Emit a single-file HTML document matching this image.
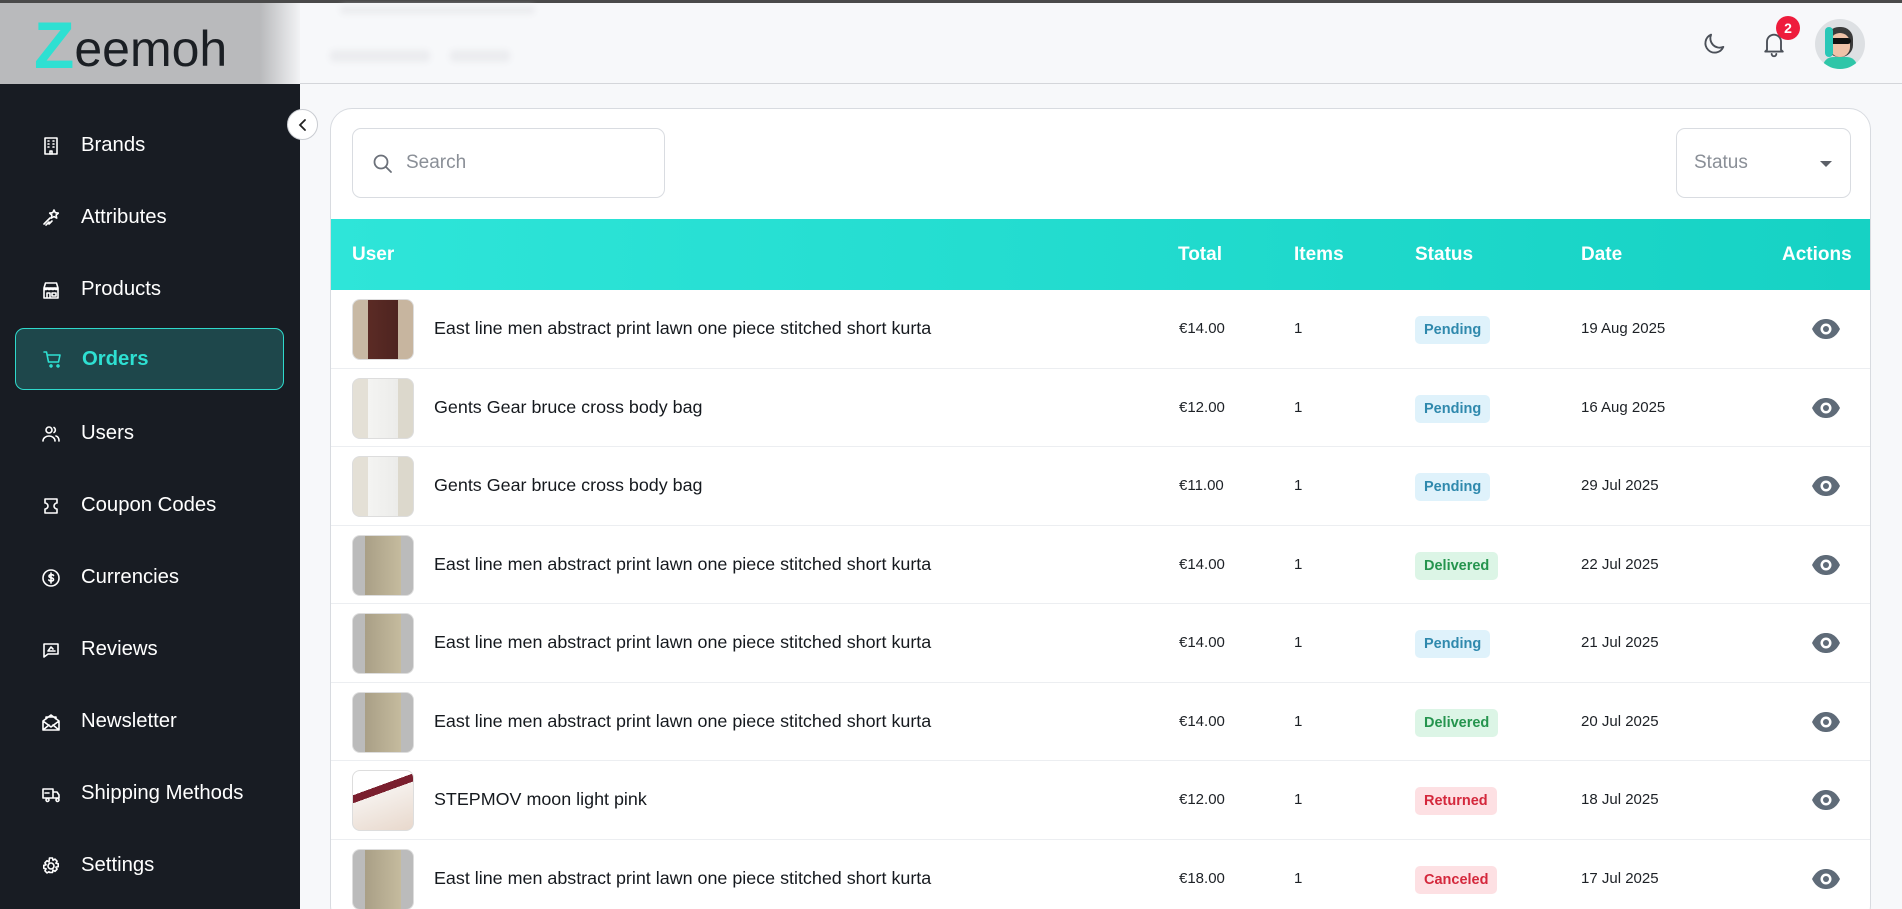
<!DOCTYPE html>
<html><head><meta charset="utf-8"><style>
*{box-sizing:border-box;margin:0;padding:0}
html{width:1902px;height:909px;overflow:hidden}
body{width:1902px;height:909px;overflow:hidden;background:#f7f8fa;font-family:"Liberation Sans",sans-serif;position:relative}
.topline{position:absolute;left:0;top:0;width:1902px;height:3px;background:#4a4a4a}
.header{position:absolute;left:0;top:3px;width:1902px;height:81px;background:#f7f8fa;border-bottom:1px solid #d4d6da}
.logoarea{position:absolute;left:0;top:3px;width:300px;height:81px;background:linear-gradient(90deg,#b9babc 0,#b9babc 260px,#f2f3f5 300px)}
.logo{position:absolute;left:34px;top:2px;font-size:50px;color:#1b1f24;white-space:nowrap}
.logo span{color:#2ee0d2;font-size:66px;font-weight:700;position:relative;top:2px}
.blur{position:absolute;background:#ebecef;border-radius:4px;filter:blur(3px)}
.sidebar{position:absolute;left:0;top:84px;width:300px;height:825px;background:#181c23}
.item{position:absolute;left:15px;width:269px;height:55px;display:flex;align-items:center;color:#fff;font-size:20.3px}
.item svg{position:absolute;left:26px;width:20px;height:20px;fill:none;stroke:#fff;stroke-width:1.6;stroke-linecap:round;stroke-linejoin:round}
.item span{position:absolute;left:66px}
.item.active{background:#1e474b;border:1.5px solid #2fd9cb;border-radius:9px;color:#2ee0d2;font-weight:700}
.item.active svg{stroke:#2ee0d2}
.collapse{position:absolute;left:287px;top:109px;width:31px;height:31px;border-radius:50%;background:#fff;border:1px solid #c9ccd1;display:flex;align-items:center;justify-content:center}
.card{position:absolute;left:330px;top:108px;width:1541px;height:820px;background:#fff;border:1px solid #d8dbe0;border-radius:22px;overflow:hidden}
.search{position:absolute;left:21px;top:19px;width:313px;height:70px;border:1px solid #d9dce1;border-radius:9px}
.search span{position:absolute;left:53px;top:23px;font-size:19px;color:#8a8f97}
.status{position:absolute;left:1345px;top:19px;width:175px;height:70px;border:1px solid #d9dce1;border-radius:9px}
.status span{position:absolute;left:17px;top:23px;font-size:19px;color:#8a8f97}
.status i{position:absolute;left:143px;top:32px;border-left:6px solid transparent;border-right:6px solid transparent;border-top:6px solid #5c6068}
.thead{position:absolute;left:0;top:110px;width:1541px;height:71px;background:linear-gradient(90deg,#2ee5d9,#16d2c4);color:#fff;font-weight:700;font-size:19px}
.thead div{position:absolute;top:25px}
.row{position:absolute;left:0;width:1541px;height:78.5px;border-bottom:1px solid #eceef1;font-size:15px;color:#1d2126}
.row .img{position:absolute;left:21px;top:9px;width:62px;height:61px;border-radius:8px;border:1px solid #ddd}
.row .t{position:absolute;left:103px;top:28px;font-size:17.9px;color:#15191e}
.row .c{position:absolute;top:30px}
.badge{position:absolute;left:1084px;top:26px;height:28px;line-height:28px;padding:0 9px;border-radius:5px;font-weight:700;font-size:14.5px}
.pend{background:#dff2fb;color:#2f89ad}
.del{background:#dcf5e6;color:#25944e}
.ret,.can{background:#fde0e3;color:#d4283c}
.eye{position:absolute;left:1480px;top:28px}
</style></head><body>
<div class="header"></div>
<div class="topline"></div>
<div class="logoarea"><div class="logo"><span>Z</span>eemoh</div></div>
<div class="blur" style="left:340px;top:6px;width:195px;height:8px"></div>
<div class="blur" style="left:330px;top:50px;width:100px;height:12px"></div>
<div class="blur" style="left:450px;top:50px;width:60px;height:12px"></div>
<svg style="position:absolute;left:1700px;top:30px" width="28" height="28" viewBox="0 0 24 24" fill="none" stroke="#4b5058" stroke-width="1.6" stroke-linecap="round" stroke-linejoin="round"><path d="M20 14.5A8 8 0 0 1 9.5 4a8 8 0 1 0 10.5 10.5z"/></svg>
<svg style="position:absolute;left:1760px;top:30px" width="28" height="28" viewBox="0 0 24 24" fill="none" stroke="#4b5058" stroke-width="1.6" stroke-linecap="round" stroke-linejoin="round"><path d="M6 17V10a6 6 0 0 1 12 0v7l1.5 1.5h-15z"/><path d="M10 20.5a2 2 0 0 0 4 0"/></svg>
<div style="position:absolute;left:1776px;top:16px;width:24px;height:24px;border-radius:50%;background:#ee1c3c;color:#fff;font-size:14px;font-weight:700;text-align:center;line-height:24px">2</div>
<div style="position:absolute;left:1815px;top:19px;width:50px;height:50px;border-radius:50%;background:#dde0e3;overflow:hidden">
<div style="position:absolute;left:12px;top:8px;width:26px;height:30px;border-radius:12px;background:#3a3a3a"></div>
<div style="position:absolute;left:15px;top:14px;width:20px;height:24px;border-radius:10px;background:#f0c2a8"></div>
<div style="position:absolute;left:14px;top:19px;width:22px;height:6px;border-radius:3px;background:#111"></div>
<div style="position:absolute;left:8px;top:38px;width:34px;height:20px;border-radius:10px;background:#2fc6a8"></div>
<div style="position:absolute;left:10px;top:8px;width:8px;height:30px;border-radius:4px;background:#2ac7b7"></div>
</div>
<div class="sidebar">
<div class="item" style="top:34px"><svg viewBox="0 0 20 20"><rect x="4" y="2" width="12" height="16"/><path d="M7 5h1M12 5h1M7 8h1M12 8h1M7 11h1M12 11h1M9 18v-3h2v3"/></svg><span>Brands</span></div>
<div class="item" style="top:106px"><svg viewBox="0 0 20 20"><path d="M13 2l1.3 2.7 3 .4-2.2 2 .6 3-2.7-1.5-2.7 1.5.6-3-2.2-2 3-.4zM9 10l-6 6M8 14l-3 3M11 13l-3 3"/></svg><span>Attributes</span></div>
<div class="item" style="top:178px"><svg viewBox="0 0 20 20"><path d="M3 8l1.5-5h11L17 8M3 8h14v10H3zM3 8c0 2 3 2 3.5 0 .5 2 3 2 3.5 0 .5 2 3 2 3.5 0 .5 2 3.5 2 3.5 0M6 18v-5h3v5M11 13h4v3h-4z"/></svg><span>Products</span></div>
<div class="item active" style="top:244px;height:62px"><svg viewBox="0 0 20 20"><path d="M2 3h2.5l2 10h10l1.5-7H5.3M8 17a1 1 0 1 0 0-.1M15 17a1 1 0 1 0 0-.1"/></svg><span>Orders</span></div>
<div class="item" style="top:322px"><svg viewBox="0 0 20 20"><circle cx="8" cy="6" r="3"/><path d="M2 17c0-3 3-5 6-5s6 2 6 5M13 3.5a3 3 0 0 1 0 5M15 12c2 .5 3 2.5 3 5"/></svg><span>Users</span></div>
<div class="item" style="top:394px"><svg viewBox="0 0 20 20"><path d="M4 3h12v4a3 3 0 0 0 0 6v4H4v-4a3 3 0 0 0 0-6z"/></svg><span>Coupon Codes</span></div>
<div class="item" style="top:466px"><svg viewBox="0 0 20 20"><circle cx="10" cy="10" r="8"/><path d="M12.5 7.5c-.5-1-4.5-1.3-4.5.7 0 2 4.5 1 4.5 3.3 0 2-4 1.8-4.7.5M10 5v10"/></svg><span>Currencies</span></div>
<div class="item" style="top:538px"><svg viewBox="0 0 20 20"><path d="M3 4h14v10H7l-4 3zM7 11l3-4 2 2M7 11h7"/></svg><span>Reviews</span></div>
<div class="item" style="top:610px"><svg viewBox="0 0 20 20"><path d="M2 9l8-6 8 6v9H2zM2 18l6-5M18 18l-6-5M2 9l8 6 8-6M5 7V5h10v2"/></svg><span>Newsletter</span></div>
<div class="item" style="top:682px"><svg viewBox="0 0 20 20"><path d="M2 5h10v9H2zM12 8h4l2 3v3h-6M5 16a1.5 1.5 0 1 0 0-.1M15 16a1.5 1.5 0 1 0 0-.1M4 9h4"/></svg><span>Shipping Methods</span></div>
<div class="item" style="top:754px"><svg viewBox="0 0 20 20"><circle cx="10" cy="10" r="3"/><path d="M8.5 2h3l.5 2.3 2-1.2 2.1 2.1-1.2 2 2.3.5v3l-2.3.5 1.2 2-2.1 2.1-2-1.2-.5 2.3h-3L8 15.7l-2 1.2-2.1-2.1 1.2-2L2.8 12.3v-3L5.1 8.8l-1.2-2L6 4.7l2 1.2z"/></svg><span>Settings</span></div>
</div>
<div class="collapse"><svg width="14" height="14" viewBox="0 0 14 14" fill="none" stroke="#222" stroke-width="1.8" stroke-linecap="round"><path d="M9 2L4 7l5 5"/></svg></div>
<div class="card">
<div class="search"><svg style="position:absolute;left:19px;top:24px" width="22" height="22" viewBox="0 0 22 22" fill="none" stroke="#6b7079" stroke-width="1.8" stroke-linecap="round"><circle cx="9" cy="9" r="6.5"/><path d="M14 14l5 5"/></svg><span>Search</span></div>
<div class="status"><span>Status</span><i></i></div>
<div class="thead"><div style="left:21px">User</div><div style="left:847px">Total</div><div style="left:963px">Items</div><div style="left:1084px">Status</div><div style="left:1250px">Date</div><div style="left:1451px">Actions</div></div>
<div class="row" style="top:181px"><div class="img" style="background:linear-gradient(90deg,#c8b9a4 0,#c8b9a4 25%,#5b2b25 25%,#4e2420 75%,#c7b59f 75%)"></div><div class="t">East line men abstract print lawn one piece stitched short kurta</div><div class="c" style="left:848px">€14.00</div><div class="c" style="left:963px">1</div><div class="badge pend">Pending</div><div class="c" style="left:1250px">19 Aug 2025</div><svg class="eye" width="30" height="22" viewBox="0 0 30 22"><path d="M1 11C5 3 10 1 15 1s10 2 14 10c-4 8-9 10-14 10S5 19 1 11z" fill="#5f6b78"/><circle cx="15" cy="11" r="5.5" fill="#fff"/><circle cx="15" cy="11" r="3" fill="#5f6b78"/></svg></div>
<div class="row" style="top:259.5px"><div class="img" style="background:linear-gradient(90deg,#e4e0d6 0,#e4e0d6 25%,#f4f4f2 25%,#ececea 75%,#dcd8cc 75%)"></div><div class="t">Gents Gear bruce cross body bag</div><div class="c" style="left:848px">€12.00</div><div class="c" style="left:963px">1</div><div class="badge pend">Pending</div><div class="c" style="left:1250px">16 Aug 2025</div><svg class="eye" width="30" height="22" viewBox="0 0 30 22"><path d="M1 11C5 3 10 1 15 1s10 2 14 10c-4 8-9 10-14 10S5 19 1 11z" fill="#5f6b78"/><circle cx="15" cy="11" r="5.5" fill="#fff"/><circle cx="15" cy="11" r="3" fill="#5f6b78"/></svg></div>
<div class="row" style="top:338px"><div class="img" style="background:linear-gradient(90deg,#e4e0d6 0,#e4e0d6 25%,#f4f4f2 25%,#ececea 75%,#dcd8cc 75%)"></div><div class="t">Gents Gear bruce cross body bag</div><div class="c" style="left:848px">€11.00</div><div class="c" style="left:963px">1</div><div class="badge pend">Pending</div><div class="c" style="left:1250px">29 Jul 2025</div><svg class="eye" width="30" height="22" viewBox="0 0 30 22"><path d="M1 11C5 3 10 1 15 1s10 2 14 10c-4 8-9 10-14 10S5 19 1 11z" fill="#5f6b78"/><circle cx="15" cy="11" r="5.5" fill="#fff"/><circle cx="15" cy="11" r="3" fill="#5f6b78"/></svg></div>
<div class="row" style="top:416.5px"><div class="img" style="background:linear-gradient(90deg,#bbb 0,#bbb 20%,#a99f86 20%,#c5bb9e 80%,#bbb 80%)"></div><div class="t">East line men abstract print lawn one piece stitched short kurta</div><div class="c" style="left:848px">€14.00</div><div class="c" style="left:963px">1</div><div class="badge del">Delivered</div><div class="c" style="left:1250px">22 Jul 2025</div><svg class="eye" width="30" height="22" viewBox="0 0 30 22"><path d="M1 11C5 3 10 1 15 1s10 2 14 10c-4 8-9 10-14 10S5 19 1 11z" fill="#5f6b78"/><circle cx="15" cy="11" r="5.5" fill="#fff"/><circle cx="15" cy="11" r="3" fill="#5f6b78"/></svg></div>
<div class="row" style="top:495px"><div class="img" style="background:linear-gradient(90deg,#bbb 0,#bbb 20%,#a99f86 20%,#c5bb9e 80%,#bbb 80%)"></div><div class="t">East line men abstract print lawn one piece stitched short kurta</div><div class="c" style="left:848px">€14.00</div><div class="c" style="left:963px">1</div><div class="badge pend">Pending</div><div class="c" style="left:1250px">21 Jul 2025</div><svg class="eye" width="30" height="22" viewBox="0 0 30 22"><path d="M1 11C5 3 10 1 15 1s10 2 14 10c-4 8-9 10-14 10S5 19 1 11z" fill="#5f6b78"/><circle cx="15" cy="11" r="5.5" fill="#fff"/><circle cx="15" cy="11" r="3" fill="#5f6b78"/></svg></div>
<div class="row" style="top:573.5px"><div class="img" style="background:linear-gradient(90deg,#bbb 0,#bbb 20%,#a99f86 20%,#c5bb9e 80%,#bbb 80%)"></div><div class="t">East line men abstract print lawn one piece stitched short kurta</div><div class="c" style="left:848px">€14.00</div><div class="c" style="left:963px">1</div><div class="badge del">Delivered</div><div class="c" style="left:1250px">20 Jul 2025</div><svg class="eye" width="30" height="22" viewBox="0 0 30 22"><path d="M1 11C5 3 10 1 15 1s10 2 14 10c-4 8-9 10-14 10S5 19 1 11z" fill="#5f6b78"/><circle cx="15" cy="11" r="5.5" fill="#fff"/><circle cx="15" cy="11" r="3" fill="#5f6b78"/></svg></div>
<div class="row" style="top:652px"><div class="img" style="background:linear-gradient(160deg,#fff 0,#fff 30%,#7a1f2e 30%,#7a1f2e 40%,#f5f0ec 40%,#e8d8cc 100%)"></div><div class="t">STEPMOV moon light pink</div><div class="c" style="left:848px">€12.00</div><div class="c" style="left:963px">1</div><div class="badge ret">Returned</div><div class="c" style="left:1250px">18 Jul 2025</div><svg class="eye" width="30" height="22" viewBox="0 0 30 22"><path d="M1 11C5 3 10 1 15 1s10 2 14 10c-4 8-9 10-14 10S5 19 1 11z" fill="#5f6b78"/><circle cx="15" cy="11" r="5.5" fill="#fff"/><circle cx="15" cy="11" r="3" fill="#5f6b78"/></svg></div>
<div class="row" style="top:730.5px"><div class="img" style="background:linear-gradient(90deg,#bbb 0,#bbb 20%,#a99f86 20%,#c5bb9e 80%,#bbb 80%)"></div><div class="t">East line men abstract print lawn one piece stitched short kurta</div><div class="c" style="left:848px">€18.00</div><div class="c" style="left:963px">1</div><div class="badge can">Canceled</div><div class="c" style="left:1250px">17 Jul 2025</div><svg class="eye" width="30" height="22" viewBox="0 0 30 22"><path d="M1 11C5 3 10 1 15 1s10 2 14 10c-4 8-9 10-14 10S5 19 1 11z" fill="#5f6b78"/><circle cx="15" cy="11" r="5.5" fill="#fff"/><circle cx="15" cy="11" r="3" fill="#5f6b78"/></svg></div>
</div>
</body></html>
